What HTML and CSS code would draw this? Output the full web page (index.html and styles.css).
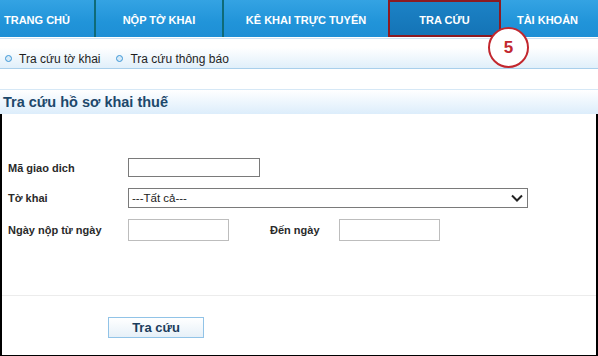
FILE: index.html
```html
<!DOCTYPE html>
<html lang="vi">
<head>
 <meta charset="UTF-8">
 <title>Tra cứu hồ sơ khai thuế</title>
 <link rel="stylesheet" href="styles.css">
</head>
<body>
<div class="page">
 <ul class="topnav">
  <li class="nav-item first">TRANG CHỦ</li>
  <li class="nav-item second">NỘP TỜ KHAI</li>
  <li class="nav-item third">KÊ KHAI TRỰC TUYẾN</li>
  <li class="nav-item active">TRA CỨU</li>
  <li class="nav-item last">TÀI KHOẢN</li>
 </ul>
 <div class="subnav">
  <span class="sub-link"><i class="dot"></i>Tra cứu tờ khai</span>
  <span class="sub-link"><i class="dot"></i>Tra cứu thông báo</span>
 </div>
 <!-- step marker -->
 <div class="badge">5</div>

 <h2 class="title">Tra cứu hồ sơ khai thuế</h2>

 <div class="panel">
  <div class="form">
   <div class="row">
    <label class="label">Mã giao dich</label>
    <input type="text" class="field code">
   </div>
   <div class="row">
    <label class="label">Tờ khai</label>
    <div class="select">
     <span>---Tất cả---</span>
     <svg width="12" height="8" viewBox="0 0 12 8"><path d="M1 1.5 L6 6.5 L11 1.5" fill="none" stroke="#222" stroke-width="2"/></svg>
    </div>
   </div>
   <div class="row">
    <label class="label">Ngày nộp từ ngày</label>
    <input type="text" class="field date">
    <label class="label to">Đến ngày</label>
    <input type="text" class="field date">
   </div>
  </div>
  <div class="actions">
   <button type="button" class="btn">Tra cứu</button>
  </div>
 </div>
</div>
</body>
</html>
```

FILE: styles.css
```css
* {
 box-sizing: border-box;
 }
body {
 margin: 0;
 font-family: "Liberation Sans", Arial, sans-serif;
 background: #fff;
 }
.page {
 position: relative;
 width: 598px;
 height: 356px;
 overflow: hidden;
 }
.topnav {
 display: flex;
 margin: 0;
 padding: 0;
 list-style: none;
 height: 37px;
 background: linear-gradient(#34a3e3, #2194d9 60%, #1e8fd5);
 }
.nav-item {
 display: flex;
 align-items: center;
 justify-content: center;
 padding-top: 3px;
 height: 37px;
 color: #fff;
 font-size: 11px;
 font-weight: bold;
 border-right: 2px solid #0f6b78;
 }
.first {
 width: 96px;
 justify-content: flex-start;
 padding-left: 4px;
 }
.second {
 width: 128px;
 }
.third {
 width: 164px;
 border-right: none;
 }
.active {
 width: 113px;
 border: 2px solid #8c1a22;
 background: linear-gradient(#1c82c6, #1474b6);
 padding-top: 2px;
 }
.last {
 flex: 1;
 border-right: none;
 padding-right: 4px;
 }
.subnav {
 display: flex;
 gap: 16px;
 height: 31px;
 margin-top: 1px;
 padding: 10px 0 0 5px;
 border-top: 1px solid #cfe3f3;
 border-bottom: 1px solid #a9cfeb;
 background: linear-gradient(#fff 30%, #e0effa);
 font-size: 12px;
 line-height: 16px;
 color: #1e1e1e;
 }
.sub-link {
 display: flex;
 align-items: center;
 }
.dot {
 display: inline-block;
 width: 7px;
 height: 7px;
 margin-right: 7px;
 border: 1.5px solid #3c96d6;
 border-radius: 50%;
 background: #d6eaf8;
 }
.badge {
 position: absolute;
 left: 488px;
 top: 27px;
 width: 41px;
 height: 41px;
 border: 2px solid #c2272e;
 border-radius: 50%;
 background: #fff;
 color: #c2272e;
 font-size: 17px;
 font-weight: bold;
 text-align: center;
 line-height: 37px;
 }
.title {
 margin: 20px 0 0;
 height: 25px;
 padding-left: 3px;
 border-top: 1px solid #d6e8f6;
 background: linear-gradient(#fff, #dcedfb);
 color: #1d486b;
 font-size: 14.5px;
 line-height: 24px;
 }
.panel {
 height: 243px;
 border: 2px solid #000;
 border-top: none;
 }
.form {
 display: flex;
 flex-direction: column;
 gap: 11px;
 height: 182px;
 padding: 44px 0 0 6px;
 border-bottom: 1px solid #ececec;
 }
.row {
 display: flex;
 align-items: center;
 }
.label {
 width: 120px;
 font-size: 11px;
 font-weight: bold;
 color: #2a2a2a;
 }
.to {
 width: 69px;
 margin-left: 41px;
 }
.field {
 margin: 0;
 padding: 0 3px;
 font: inherit;
 border: 1px solid #7a7a7a;
 background: #fff;
 }
.code {
 width: 132px;
 height: 19px;
 }
.date {
 width: 101px;
 height: 22px;
 border-color: #bdbdbd;
 }
.select {
 display: flex;
 align-items: center;
 justify-content: space-between;
 width: 400px;
 height: 20px;
 padding: 0 4px 0 3px;
 border: 1px solid #7a7a7a;
 font-size: 11.5px;
 color: #222;
 }
.actions {
 padding: 21px 0 0 106px;
 }
.btn {
 width: 96px;
 height: 21px;
 padding: 0;
 border: 1px solid #91c3e7;
 background: linear-gradient(#fff, #e6f0f8);
 color: #1b3d5c;
 font-family: inherit;
 font-size: 13px;
 font-weight: bold;
 }
```
